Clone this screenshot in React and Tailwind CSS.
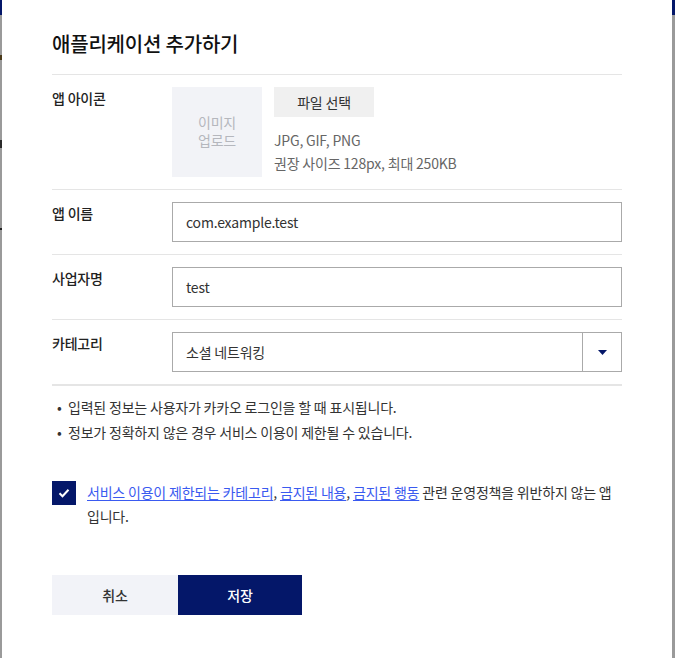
import React, { useState } from "react";

const NAVY = "bg-[#041769]";

const Row = ({ label, children, last }) => {
  return (
    <div className={`flex py-3 ${last ? "" : "border-b border-[#e5e5e5]"}`}>
      <div className="w-[120px] shrink-0 text-[14px] leading-[22px] font-medium text-[#222]">
        {label}
      </div>
      <div className="flex-1">{children}</div>
    </div>
  );
};

const TextInput = ({ value }) => (
  <div className="h-10 border border-[#aaaaaa] flex items-center px-[13px] text-[14px] text-[#333]">
    {value}
  </div>
);

export default function App() {
  const [checked, setChecked] = useState(true);

  return (
    <div
      className="flex h-[658px] w-full overflow-hidden bg-white tracking-[-0.2px]"
      style={{ fontFamily: '"Noto Sans CJK KR", "Noto Sans", sans-serif' }}
    >
      {/* page behind the modal */}
      <div className="w-[2px] shrink-0 flex flex-col bg-[#9a9a9a]">
        <div className="h-[15px] bg-[#041769]" />
        <div className="h-[40px]" />
        <div className="h-[5px] bg-[#4a3a1a]" />
        <div className="h-[80px]" />
        <div className="h-[8px] bg-[#2a2a2a]" />
        <div className="h-[80px]" />
        <div className="h-[2px] bg-[#222]" />
      </div>

      <div className="flex-1 bg-white pl-[50px] pr-[50px] pt-[29px]">
        <h1 className="text-[20px] leading-[30px] font-medium text-[#111] pb-[15px] border-b border-[#e5e5e5]">
          애플리케이션 추가하기
        </h1>

        <Row label="앱 아이콘">
          <div className="flex gap-3">
            <div className="w-[90px] h-[90px] bg-[#f2f3f7] flex flex-col items-center justify-center pb-[2px] text-[14px] leading-[18px] text-[#b5b7bd]">
              <span>이미지</span>
              <span>업로드</span>
            </div>
            <div className="flex flex-col">
              <button className="w-[100px] h-[30px] bg-[#f0f0f0] text-[14px] text-[#333]">
                파일 선택
              </button>
              <div className="mt-3 text-[14px] leading-[23px] text-[#666]">
                <p>JPG, GIF, PNG</p>
                <p>권장 사이즈 128px, 최대 250KB</p>
              </div>
            </div>
          </div>
        </Row>

        <Row label="앱 이름">
          <TextInput value="com.example.test" />
        </Row>

        <Row label="사업자명">
          <TextInput value="test" />
        </Row>

        <Row label="카테고리">
          <div className="h-10 border border-[#aaaaaa] flex text-[14px] text-[#333]">
            <div className="flex-1 flex items-center px-[13px]">소셜 네트워킹</div>
            <div className="w-[39px] border-l border-[#aaaaaa] flex items-center justify-center">
              <svg width="9" height="5" viewBox="0 0 9 5">
                <path d="M0 0h9L4.5 5z" fill="#041769" />
              </svg>
            </div>
          </div>
        </Row>

        <div className="border-t border-[#e5e5e5] pt-[9px] text-[14px] leading-[25px] text-[#333]">
          <p className="flex">
            <span className="w-4 pl-[5px]">•</span>입력된 정보는 사용자가 카카오 로그인을 할 때 표시됩니다.
          </p>
          <p className="flex">
            <span className="w-4 pl-[5px]">•</span>정보가 정확하지 않은 경우 서비스 이용이 제한될 수 있습니다.
          </p>
        </div>

        <div className="flex mt-[36px] gap-[11px]">
          <button
            onClick={() => setChecked(!checked)}
            className={`w-6 h-6 shrink-0 flex items-center justify-center ${checked ? NAVY : "bg-white border border-[#aaa]"}`}
          >
            {checked && (
              <svg width="12" height="10" viewBox="0 0 12 10">
                <path d="M1.5 5.2l3 3 6-6.5" stroke="#fff" strokeWidth="2" fill="none" />
              </svg>
            )}
          </button>
          <p className="text-[14px] leading-[24px] text-[#333] -mt-[1px]">
            <a href="#" className="text-[#3a5af0] underline underline-offset-2">
              서비스 이용이 제한되는 카테고리
            </a>
            ,{" "}
            <a href="#" className="text-[#3a5af0] underline underline-offset-2">
              금지된 내용
            </a>
            ,{" "}
            <a href="#" className="text-[#3a5af0] underline underline-offset-2">
              금지된 행동
            </a>{" "}
            관련 운영정책을 위반하지 않는 앱입니다.
          </p>
        </div>

        <div className="flex mt-[47px]">
          <button className="w-[126px] h-10 bg-[#f2f3f8] text-[14px] font-medium text-[#333]">
            취소
          </button>
          <button className={`w-[124px] h-10 ${NAVY} text-[14px] font-medium text-white`}>
            저장
          </button>
        </div>
      </div>

      <div className="w-[3px] shrink-0 flex flex-col bg-[#9a9a9a]">
        <div className="h-[15px] bg-[#041769]" />
      </div>
    </div>
  );
}
